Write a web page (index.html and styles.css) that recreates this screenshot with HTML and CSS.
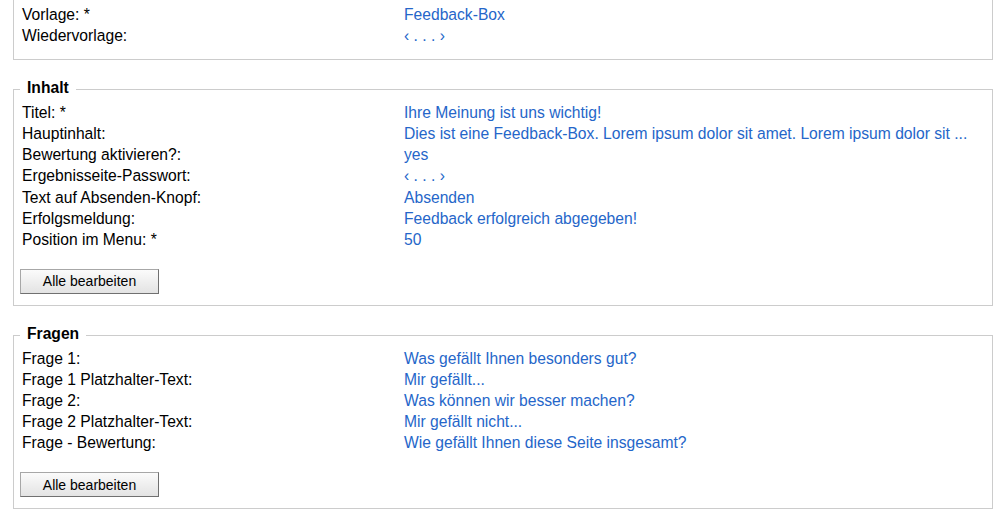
FILE: index.html
```html
<!DOCTYPE html>
<html lang="de">
<head>
<meta charset="utf-8">
<title>Feedback-Box</title>
<link rel="stylesheet" href="styles.css">
</head>
<body>
<fieldset class="box cut">
  <div class="row"><span class="label">Vorlage: *</span><span class="value">Feedback-Box</span></div>
  <div class="row"><span class="label">Wiedervorlage:</span><span class="value">‹ . . . ›</span></div>
</fieldset>

<fieldset class="box">
  <legend>Inhalt</legend>
  <div class="row"><span class="label">Titel: *</span><span class="value">Ihre Meinung ist uns wichtig!</span></div>
  <div class="row"><span class="label">Hauptinhalt:</span><span class="value">Dies ist eine Feedback-Box. Lorem ipsum dolor sit amet. Lorem ipsum dolor sit ...</span></div>
  <div class="row"><span class="label">Bewertung aktivieren?:</span><span class="value">yes</span></div>
  <div class="row"><span class="label">Ergebnisseite-Passwort:</span><span class="value">‹ . . . ›</span></div>
  <div class="row"><span class="label">Text auf Absenden-Knopf:</span><span class="value">Absenden</span></div>
  <div class="row"><span class="label">Erfolgsmeldung:</span><span class="value">Feedback erfolgreich abgegeben!</span></div>
  <div class="row"><span class="label">Position im Menu: *</span><span class="value">50</span></div>
  <button class="btn" type="button">Alle bearbeiten</button>
</fieldset>

<fieldset class="box">
  <legend>Fragen</legend>
  <div class="row"><span class="label">Frage 1:</span><span class="value">Was gefällt Ihnen besonders gut?</span></div>
  <div class="row"><span class="label">Frage 1 Platzhalter-Text:</span><span class="value">Mir gefällt...</span></div>
  <div class="row"><span class="label">Frage 2:</span><span class="value">Was können wir besser machen?</span></div>
  <div class="row"><span class="label">Frage 2 Platzhalter-Text:</span><span class="value">Mir gefällt nicht...</span></div>
  <div class="row"><span class="label">Frage - Bewertung:</span><span class="value">Wie gefällt Ihnen diese Seite insgesamt?</span></div>
  <button class="btn" type="button">Alle bearbeiten</button>
</fieldset>
</body>
</html>
```

FILE: styles.css
```css
html, body {
  background: #ffffff;
}
body {
  margin: 0 12px 0 13px;
  font-family: "Liberation Sans", Arial, sans-serif;
  font-size: 15.65px;
  color: #000;
}
.box {
  border: 1px solid #cccccc;
  margin: 17px 0 0 0;
  padding: 0 12px 11px 6px;
  min-width: 0;
}
.box.cut {
  border-top: 0;
  margin-top: 0;
  padding-top: 4px;
  padding-bottom: 13px;
}
legend {
  font-weight: bold;
  font-size: 15.65px;
  line-height: 21px;
  padding: 0 7px 4px;
  margin-left: 0;
}
.row {
  display: grid;
  grid-template-columns: 382px 1fr;
  line-height: 21.1px;
  padding-left: 2px;
  white-space: nowrap;
}
.value {
  color: #2566c9;
}
.btn {
  display: block;
  margin-top: 19px;
  width: 139px;
  height: 25px;
  font-family: "Liberation Sans", Arial, sans-serif;
  font-size: 14px;
  color: #000;
  background: linear-gradient(#fbfbfb, #e3e3e3);
  border: 1px solid #a7a7a7;
  border-right-color: #707070;
  border-bottom-color: #707070;
  border-radius: 0;
  padding: 0;
}
```
